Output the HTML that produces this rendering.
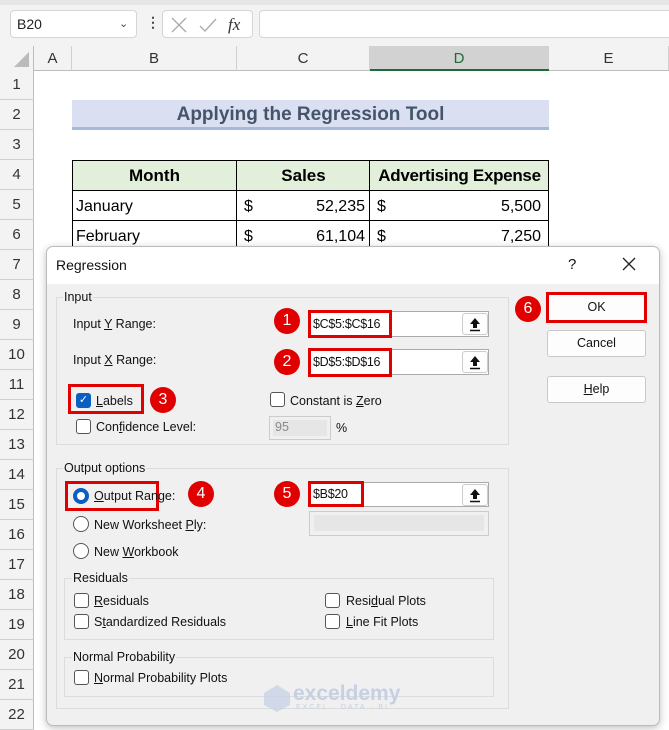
<!DOCTYPE html>
<html><head><meta charset="utf-8"><style>
*{margin:0;padding:0;box-sizing:border-box}
body{width:669px;height:730px;position:relative;overflow:hidden;background:#fff;font-family:"Liberation Sans",sans-serif}
.a{position:absolute}
.rh{position:absolute;left:0;width:34px;height:30px;background:#f3f3f3;border-bottom:1px solid #d0d0d0;border-right:1px solid #bdbdbd;text-align:center;line-height:30px;font-size:15px;color:#333}
.ch{position:absolute;top:46px;height:25px;background:#f3f3f3;border-right:1px solid #d0d0d0;border-bottom:1px solid #bdbdbd;text-align:center;line-height:25px;font-size:15px;color:#333}
.dl{font-size:12.5px;color:#111;position:absolute;white-space:nowrap}
.cb{position:absolute;width:15px;height:15px;border:1px solid #555;border-radius:3px;background:#fff}
.rd{position:absolute;width:16px;height:16px;border:1px solid #555;border-radius:50%;background:#fff}
.circ{position:absolute;width:26px;height:26px;border-radius:50%;background:#e00000;color:#fff;font-size:16px;text-align:center;line-height:26px}
.rb{position:absolute;border:3px solid #e00000}
.fld{position:absolute;background:#fff;border:1px solid #aaa}
.up{position:absolute;width:26px;height:22px;border:1px solid #ccc;border-radius:3px;background:#fdfdfd}
.btn{position:absolute;left:547px;width:99px;height:27px;border:1px solid #c8c8c8;border-radius:3px;background:#fdfdfd;text-align:center;line-height:25px;font-size:12.5px;color:#111}
.grp{position:absolute;border:1px solid #dcdcdc}
.gl{position:absolute;background:#f0f0f0;font-size:12.5px;color:#111;padding:0 1px}
u{text-decoration:underline}
</style></head><body>
<div class="a" style="left:0;top:0;width:669px;height:46px;background:#f3f3f3"></div>
<div class="a" style="left:0;top:0;width:669px;height:5px;background:#e6e6e6"></div>
<div class="a" style="left:10px;top:10px;width:127px;height:28px;background:#fff;border:1px solid #d6d6d6;border-radius:4px;font-size:14px;line-height:26px;padding-left:6px;color:#222">B20<span class="a" style="left:108px;top:0;font-size:11px;color:#444">&#8964;</span></div>
<div class="a" style="left:146px;top:14px;font-size:14px;color:#444;font-weight:bold">&#8942;</div>
<div class="a" style="left:162px;top:10px;width:91px;height:28px;background:#fff;border:1px solid #d6d6d6;border-radius:4px"></div>
<svg class="a" style="left:170px;top:16px" width="80" height="18"><path d="M2 2L16 16M16 2L2 16" stroke="#aaa" stroke-width="1.3"/><path d="M30 10L35 15L46 3" stroke="#aaa" stroke-width="1.3" fill="none"/><text x="58" y="14" font-family="Liberation Serif" font-style="italic" font-size="17" fill="#333">fx</text></svg>
<div class="a" style="left:259px;top:10px;width:420px;height:28px;background:#fff;border:1px solid #d6d6d6;border-radius:4px"></div>
<div class="a" style="left:0;top:46px;width:34px;height:25px;background:#f3f3f3;border-right:1px solid #bdbdbd;border-bottom:1px solid #bdbdbd"></div>
<svg class="a" style="left:12px;top:52px" width="18" height="16"><path d="M17 0L17 15L2 15Z" fill="#bbb"/></svg>
<div class="ch" style="left:34px;width:38px">A</div>
<div class="ch" style="left:72px;width:165px">B</div>
<div class="ch" style="left:237px;width:133px">C</div>
<div class="ch" style="left:370px;width:179px;background:#d2d2d2;color:#1e6b3a">D</div>
<div class="ch" style="left:549px;width:120px">E</div>
<div class="a" style="left:370px;top:69px;width:179px;height:2px;background:#1e6b3a"></div>
<div class="rh" style="top:70px">1</div><div class="rh" style="top:100px">2</div><div class="rh" style="top:130px">3</div><div class="rh" style="top:160px">4</div><div class="rh" style="top:190px">5</div><div class="rh" style="top:220px">6</div><div class="rh" style="top:250px">7</div><div class="rh" style="top:280px">8</div><div class="rh" style="top:310px">9</div><div class="rh" style="top:340px">10</div><div class="rh" style="top:370px">11</div><div class="rh" style="top:400px">12</div><div class="rh" style="top:430px">13</div><div class="rh" style="top:460px">14</div><div class="rh" style="top:490px">15</div><div class="rh" style="top:520px">16</div><div class="rh" style="top:550px">17</div><div class="rh" style="top:580px">18</div><div class="rh" style="top:610px">19</div><div class="rh" style="top:640px">20</div><div class="rh" style="top:670px">21</div><div class="rh" style="top:700px">22</div>
<div class="a" style="left:72px;top:100px;width:477px;height:30px;background:#dae0f1;border-bottom:3px solid #a6b8dd;text-align:center;font-size:19px;font-weight:bold;color:#44546a;line-height:30px">Applying the Regression Tool</div>
<div class="a" style="left:72px;top:160px;width:477px;height:31px;background:#e2efda;border:1px solid #000"></div>
<div class="a" style="left:72px;top:160px;width:165px;height:31px;text-align:center;line-height:32px;font-size:17px;font-weight:bold">Month</div>
<div class="a" style="left:237px;top:160px;width:133px;height:31px;text-align:center;line-height:32px;font-size:17px;font-weight:bold">Sales</div>
<div class="a" style="left:370px;top:160px;width:179px;height:31px;text-align:center;line-height:32px;font-size:17px;font-weight:bold;letter-spacing:-0.3px">Advertising Expense</div>
<div class="a" style="left:72px;top:160px;width:477px;height:100px;border-left:1px solid #000;border-right:1px solid #000"></div>
<div class="a" style="left:236px;top:160px;width:1px;height:100px;background:#000"></div>
<div class="a" style="left:369px;top:160px;width:1px;height:100px;background:#000"></div>
<div class="a" style="left:72px;top:220px;width:477px;height:1px;background:#000"></div>
<div class="a" style="left:76px;top:198px;font-size:16px">January</div>
<div class="a" style="left:244px;top:198px;font-size:16px">$</div><div class="a" style="left:290px;width:75px;text-align:right;top:198px;font-size:16px">52,235</div>
<div class="a" style="left:377px;top:198px;font-size:16px">$</div><div class="a" style="left:440px;width:101px;text-align:right;top:198px;font-size:16px">5,500</div>
<div class="a" style="left:76px;top:228px;font-size:16px">February</div>
<div class="a" style="left:244px;top:228px;font-size:16px">$</div><div class="a" style="left:290px;width:75px;text-align:right;top:228px;font-size:16px">61,104</div>
<div class="a" style="left:377px;top:228px;font-size:16px">$</div><div class="a" style="left:440px;width:101px;text-align:right;top:228px;font-size:16px">7,250</div>
<div class="a" style="left:46px;top:246px;width:614px;height:480px;background:#f0f0f0;border:1px solid #bbb;border-radius:7px;box-shadow:0 2px 8px rgba(0,0,0,.25);overflow:hidden">
<div class="a" style="left:0;top:0;width:614px;height:37px;background:#fff"></div>
</div>
<div class="dl" style="left:56px;top:257px;font-size:14px">Regression</div>
<div class="dl" style="left:568px;top:256px;font-size:15px">?</div>
<svg class="a" style="left:622px;top:257px" width="14" height="14"><path d="M1 1L13 13M13 1L1 13" stroke="#222" stroke-width="1.3"/></svg>
<div class="grp" style="left:56px;top:297px;width:453px;height:148px"></div>
<div class="gl" style="left:63px;top:290px">Input</div>
<div class="dl" style="left:73px;top:317px">Input <u>Y</u> Range:</div>
<div class="dl" style="left:73px;top:353px">Input <u>X</u> Range:</div>
<div class="fld" style="left:308px;top:311px;width:181px;height:26px"></div>
<div class="fld" style="left:308px;top:349px;width:181px;height:26px"></div>
<div class="rb" style="left:308px;top:310px;width:84px;height:28px"></div>
<div class="dl" style="left:313px;top:317px;letter-spacing:-0.3px">$C$5:$C$16</div>
<div class="rb" style="left:308px;top:348px;width:84px;height:29px"></div>
<div class="dl" style="left:313px;top:355px;letter-spacing:-0.3px">$D$5:$D$16</div>
<div class="circ" style="left:274px;top:308px">1</div>
<div class="circ" style="left:274px;top:349px">2</div>
<div class="rb" style="left:68px;top:384px;width:76px;height:30px"></div>
<div class="cb" style="left:76px;top:393px;background:#0a5fc2;border-color:#0a5fc2;color:#fff;font-size:11px;text-align:center;line-height:13px">&#10003;</div>
<div class="dl" style="left:96px;top:394px"><u>L</u>abels</div>
<div class="circ" style="left:150px;top:387px">3</div>
<div class="cb" style="left:270px;top:392px"></div>
<div class="dl" style="left:290px;top:394px">Constant is <u>Z</u>ero</div>
<div class="cb" style="left:76px;top:419px"></div>
<div class="dl" style="left:96px;top:420px">Con<u>f</u>idence Level:</div>
<div class="a" style="left:269px;top:416px;width:62px;height:24px;border:1px solid #ccc;background:#f0f0f0"><div class="a" style="left:3px;top:3px;width:54px;height:16px;background:#e6e6e6;font-size:12.5px;color:#888;padding-left:2px">95</div></div>
<div class="dl" style="left:336px;top:421px">%</div>
<div class="btn" style="top:294px">OK</div>
<div class="rb" style="left:546px;top:292px;width:101px;height:31px"></div>
<div class="circ" style="left:515px;top:296px">6</div>
<div class="btn" style="top:330px">Cancel</div>
<div class="btn" style="top:376px"><u>H</u>elp</div>
<div class="grp" style="left:56px;top:468px;width:453px;height:241px"></div>
<div class="gl" style="left:63px;top:461px">Output options</div>
<div class="rb" style="left:65px;top:481px;width:94px;height:30px"></div>
<div class="rd" style="left:73px;top:488px;border:4px solid #0a5fc2"></div>
<div class="dl" style="left:94px;top:489px"><u>O</u>utput Range:</div>
<div class="circ" style="left:188px;top:481px">4</div>
<div class="rd" style="left:73px;top:516px"></div>
<div class="dl" style="left:94px;top:518px">New Worksheet <u>P</u>ly:</div>
<div class="rd" style="left:73px;top:543px"></div>
<div class="dl" style="left:94px;top:545px">New <u>W</u>orkbook</div>
<div class="fld" style="left:308px;top:482px;width:181px;height:25px"></div>
<div class="rb" style="left:308px;top:481px;width:56px;height:26px"></div>
<div class="dl" style="left:313px;top:487px;letter-spacing:-0.3px">$B$20</div>
<div class="circ" style="left:274px;top:481px">5</div>
<div class="a" style="left:309px;top:511px;width:180px;height:25px;border:1px solid #ccc;background:#f0f0f0"><div class="a" style="left:4px;top:3px;width:170px;height:16px;background:#e6e6e6"></div></div>
<!-- upload buttons -->
<div class="up" style="left:462px;top:313px"><svg width="24" height="20"><path d="M12 4L7 10H10V14H14V10H17Z" fill="#111"/><path d="M7 16.5H17" stroke="#111" stroke-width="1.5"/></svg></div>
<div class="up" style="left:462px;top:351px"><svg width="24" height="20"><path d="M12 4L7 10H10V14H14V10H17Z" fill="#111"/><path d="M7 16.5H17" stroke="#111" stroke-width="1.5"/></svg></div>
<div class="up" style="left:462px;top:484px"><svg width="24" height="20"><path d="M12 4L7 10H10V14H14V10H17Z" fill="#111"/><path d="M7 16.5H17" stroke="#111" stroke-width="1.5"/></svg></div>
<div class="grp" style="left:64px;top:578px;width:430px;height:62px"></div>
<div class="gl" style="left:72px;top:571px">Residuals</div>
<div class="cb" style="left:74px;top:593px"></div><div class="dl" style="left:94px;top:594px"><u>R</u>esiduals</div>
<div class="cb" style="left:74px;top:614px"></div><div class="dl" style="left:94px;top:615px">S<u>t</u>andardized Residuals</div>
<div class="cb" style="left:325px;top:593px"></div><div class="dl" style="left:346px;top:594px">Resi<u>d</u>ual Plots</div>
<div class="cb" style="left:325px;top:614px"></div><div class="dl" style="left:346px;top:615px"><u>L</u>ine Fit Plots</div>
<div class="grp" style="left:64px;top:657px;width:430px;height:40px"></div>
<div class="gl" style="left:72px;top:650px">Normal Probability</div>
<div class="cb" style="left:74px;top:670px"></div><div class="dl" style="left:94px;top:671px"><u>N</u>ormal Probability Plots</div>
<svg class="a" style="left:262px;top:683px" width="30" height="30"><path d="M15 2L28 10L28 22L15 29L2 22L2 10Z" fill="#c9d3e6" opacity=".8"/></svg>
<div class="a" style="left:293px;top:682px;font-size:21px;font-weight:bold;color:#c6d0e3">exceldemy</div>
<div class="a" style="left:296px;top:704px;font-size:7px;color:#c6d0e3;letter-spacing:2px">EXCEL · DATA · BI</div>
</body></html>
